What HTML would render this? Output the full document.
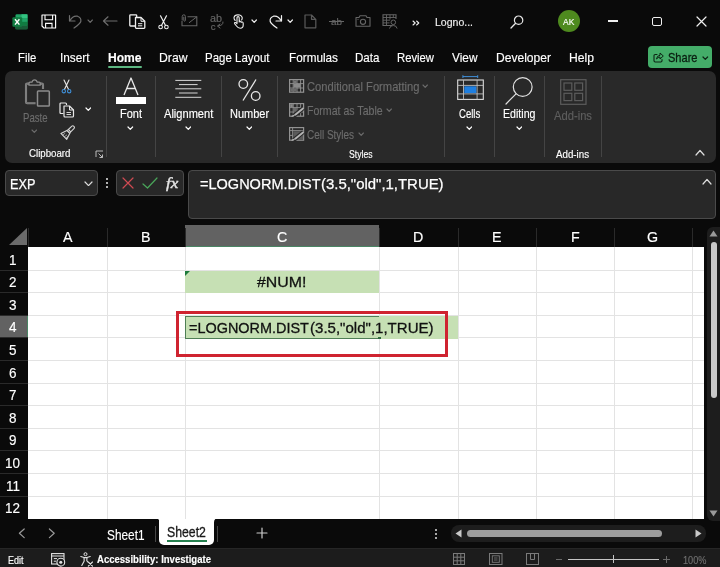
<!DOCTYPE html>
<html><head><meta charset="utf-8"><title>Excel</title>
<style>
html,body{margin:0;padding:0;}
body{width:720px;height:567px;overflow:hidden;background:#0a0a0a;position:relative;font-family:"Liberation Sans",sans-serif;}
.t{position:absolute;white-space:nowrap;transform-origin:0 0;line-height:normal;}
.r{position:absolute;display:block;}
#app{position:absolute;left:0;top:0;width:720px;height:567px;will-change:transform;}
</style></head><body><div id="app">
<div class="r" style="left:28px;top:247px;width:676px;height:271.5px;background:#fff;"></div>
<div class="r" style="left:184.5px;top:225px;width:194.5px;height:22.3px;background:#626262;border-bottom:1.3px solid #4a8564;box-sizing:border-box;"></div>
<div class="r" style="left:27.5px;top:228px;width:1px;height:19px;background:#2a2a2a;"></div>
<div class="r" style="left:106.5px;top:228px;width:1px;height:19px;background:#2a2a2a;"></div>
<div class="r" style="left:184.5px;top:228px;width:1px;height:19px;background:#2a2a2a;"></div>
<div class="r" style="left:378.5px;top:228px;width:1px;height:19px;background:#2a2a2a;"></div>
<div class="r" style="left:457.5px;top:228px;width:1px;height:19px;background:#2a2a2a;"></div>
<div class="r" style="left:535.5px;top:228px;width:1px;height:19px;background:#2a2a2a;"></div>
<div class="r" style="left:613.5px;top:228px;width:1px;height:19px;background:#2a2a2a;"></div>
<div class="r" style="left:691.5px;top:228px;width:1px;height:19px;background:#2a2a2a;"></div>
<span class="t" style="left:62.75px;top:228.39px;font-size:15px;color:#fff;transform:scaleX(0.9500);-webkit-text-stroke:0.15px;">A</span>
<span class="t" style="left:141.25px;top:228.39px;font-size:15px;color:#fff;transform:scaleX(0.9500);-webkit-text-stroke:0.15px;">B</span>
<span class="t" style="left:276.85px;top:228.39px;font-size:15px;color:#fff;transform:scaleX(0.9500);-webkit-text-stroke:0.15px;">C</span>
<span class="t" style="left:413.35px;top:228.39px;font-size:15px;color:#fff;transform:scaleX(0.9500);-webkit-text-stroke:0.15px;">D</span>
<span class="t" style="left:492.25px;top:228.39px;font-size:15px;color:#fff;transform:scaleX(0.9500);-webkit-text-stroke:0.15px;">E</span>
<span class="t" style="left:570.65px;top:228.39px;font-size:15px;color:#fff;transform:scaleX(0.9500);-webkit-text-stroke:0.15px;">F</span>
<span class="t" style="left:647.46px;top:228.39px;font-size:15px;color:#fff;transform:scaleX(0.9500);-webkit-text-stroke:0.15px;">G</span>
<div class="r" style="left:106.5px;top:247px;width:1px;height:271.5px;background:#e3e3e3;"></div>
<div class="r" style="left:184.5px;top:247px;width:1px;height:271.5px;background:#e3e3e3;"></div>
<div class="r" style="left:378.5px;top:247px;width:1px;height:271.5px;background:#e3e3e3;"></div>
<div class="r" style="left:457.5px;top:247px;width:1px;height:271.5px;background:#e3e3e3;"></div>
<div class="r" style="left:535.5px;top:247px;width:1px;height:271.5px;background:#e3e3e3;"></div>
<div class="r" style="left:613.5px;top:247px;width:1px;height:271.5px;background:#e3e3e3;"></div>
<div class="r" style="left:691.5px;top:247px;width:1px;height:271.5px;background:#e3e3e3;"></div>
<div class="r" style="left:28px;top:269.5px;width:676px;height:1px;background:#e3e3e3;"></div>
<div class="r" style="left:28px;top:291.5px;width:676px;height:1px;background:#e3e3e3;"></div>
<div class="r" style="left:28px;top:314.5px;width:676px;height:1px;background:#e3e3e3;"></div>
<div class="r" style="left:28px;top:336.5px;width:676px;height:1px;background:#e3e3e3;"></div>
<div class="r" style="left:28px;top:359.5px;width:676px;height:1px;background:#e3e3e3;"></div>
<div class="r" style="left:28px;top:382.5px;width:676px;height:1px;background:#e3e3e3;"></div>
<div class="r" style="left:28px;top:404.5px;width:676px;height:1px;background:#e3e3e3;"></div>
<div class="r" style="left:28px;top:427.5px;width:676px;height:1px;background:#e3e3e3;"></div>
<div class="r" style="left:28px;top:449.5px;width:676px;height:1px;background:#e3e3e3;"></div>
<div class="r" style="left:28px;top:472.5px;width:676px;height:1px;background:#e3e3e3;"></div>
<div class="r" style="left:28px;top:495.5px;width:676px;height:1px;background:#e3e3e3;"></div>
<span class="t" style="left:8.95px;top:251.66px;font-size:14.5px;color:#fff;transform:scaleX(0.9300);-webkit-text-stroke:0.15px;">1</span>
<span class="t" style="left:8.95px;top:274.26px;font-size:14.5px;color:#fff;transform:scaleX(0.9300);-webkit-text-stroke:0.15px;">2</span>
<div class="r" style="left:0px;top:269.5px;width:28px;height:1px;background:#2a2a2a;"></div>
<span class="t" style="left:8.95px;top:296.86px;font-size:14.5px;color:#fff;transform:scaleX(0.9300);-webkit-text-stroke:0.15px;">3</span>
<div class="r" style="left:0px;top:291.5px;width:28px;height:1px;background:#2a2a2a;"></div>
<div class="r" style="left:0px;top:315px;width:28px;height:22px;background:#626262;border-right:1.3px solid #4a8564;box-sizing:border-box;"></div>
<span class="t" style="left:8.95px;top:319.46px;font-size:14.5px;color:#fff;transform:scaleX(0.9300);-webkit-text-stroke:0.15px;">4</span>
<div class="r" style="left:0px;top:314.5px;width:28px;height:1px;background:#2a2a2a;"></div>
<span class="t" style="left:8.95px;top:342.06px;font-size:14.5px;color:#fff;transform:scaleX(0.9300);-webkit-text-stroke:0.15px;">5</span>
<div class="r" style="left:0px;top:336.5px;width:28px;height:1px;background:#2a2a2a;"></div>
<span class="t" style="left:8.95px;top:364.66px;font-size:14.5px;color:#fff;transform:scaleX(0.9300);-webkit-text-stroke:0.15px;">6</span>
<div class="r" style="left:0px;top:359.5px;width:28px;height:1px;background:#2a2a2a;"></div>
<span class="t" style="left:8.95px;top:387.26px;font-size:14.5px;color:#fff;transform:scaleX(0.9300);-webkit-text-stroke:0.15px;">7</span>
<div class="r" style="left:0px;top:382.5px;width:28px;height:1px;background:#2a2a2a;"></div>
<span class="t" style="left:8.95px;top:409.86px;font-size:14.5px;color:#fff;transform:scaleX(0.9300);-webkit-text-stroke:0.15px;">8</span>
<div class="r" style="left:0px;top:404.5px;width:28px;height:1px;background:#2a2a2a;"></div>
<span class="t" style="left:8.95px;top:432.46px;font-size:14.5px;color:#fff;transform:scaleX(0.9300);-webkit-text-stroke:0.15px;">9</span>
<div class="r" style="left:0px;top:427.5px;width:28px;height:1px;background:#2a2a2a;"></div>
<span class="t" style="left:5.20px;top:455.06px;font-size:14.5px;color:#fff;transform:scaleX(0.9300);-webkit-text-stroke:0.15px;">10</span>
<div class="r" style="left:0px;top:449.5px;width:28px;height:1px;background:#2a2a2a;"></div>
<span class="t" style="left:5.70px;top:477.66px;font-size:14.5px;color:#fff;transform:scaleX(0.9300);-webkit-text-stroke:0.15px;">11</span>
<div class="r" style="left:0px;top:472.5px;width:28px;height:1px;background:#2a2a2a;"></div>
<span class="t" style="left:5.20px;top:500.26px;font-size:14.5px;color:#fff;transform:scaleX(0.9300);-webkit-text-stroke:0.15px;">12</span>
<div class="r" style="left:0px;top:495.5px;width:28px;height:1px;background:#2a2a2a;"></div>
<svg class="r" style="left:9px;top:228px;" width="18" height="17" viewBox="0 0 18 17" fill="none"><path d="M18 0 L18 17 L0 17 Z" fill="#6b6b6b"/></svg>
<div class="r" style="left:185px;top:270.5px;width:193.5px;height:22px;background:#c6e0b4;"></div>
<svg class="r" style="left:185px;top:270.5px;" width="6" height="6" viewBox="0 0 6 6" fill="none"><path d="M0 0 L5 0 L0 5 Z" fill="#1e7b3c"/></svg>
<span class="t" style="left:257.20px;top:272.98px;font-size:15.4px;color:#111;transform:scaleX(1.0310);-webkit-text-stroke:0.3px;">#NUM!</span>
<div class="r" style="left:185px;top:316px;width:272.5px;height:22.5px;background:#c6e0b4;"></div>
<div class="r" style="left:185px;top:316px;width:194px;height:22.5px;background:transparent;border:1px solid #4f7f55;border-right:none;box-sizing:border-box;"></div>
<div class="r" style="left:377.5px;top:337px;width:3px;height:2px;background:#2f6b3f;"></div>
<span class="t" style="left:188.60px;top:318.88px;font-size:15.2px;color:#111;transform:scaleX(0.9504);-webkit-text-stroke:0.3px;">=LOGNORM.DIST</span>
<span class="t" style="left:309.60px;top:318.88px;font-size:15.2px;color:#111;transform:scaleX(0.9910);-webkit-text-stroke:0.3px;">(3.5,"old",1,TRUE)</span>
<div class="r" style="left:176.3px;top:311px;width:271.7px;height:45.5px;background:transparent;border:3.2px solid #cf2330;box-sizing:border-box;"></div>
<div class="r" style="left:5px;top:170px;width:93px;height:25.7px;background:#282828;border:1px solid #4a4a4a;border-radius:4px;box-sizing:border-box;"></div>
<span class="t" style="left:9.90px;top:175.19px;font-size:15px;color:#fff;transform:scaleX(0.8462);-webkit-text-stroke:0.25px;">EXP</span>
<svg class="r" style="left:83.5px;top:180.7px;" width="9" height="5.6" viewBox="0 0 9 5.6" fill="none"><path d="M1 1 L4.5 4.6 L8 1" stroke="#ddd" stroke-width="1.2" stroke-linecap="round" stroke-linejoin="round"/></svg>
<div class="r" style="left:106px;top:178px;width:2px;height:2px;background:#e8e8e8;border-radius:1px;"></div>
<div class="r" style="left:106px;top:182.2px;width:2px;height:2px;background:#e8e8e8;border-radius:1px;"></div>
<div class="r" style="left:106px;top:186.4px;width:2px;height:2px;background:#e8e8e8;border-radius:1px;"></div>
<div class="r" style="left:116px;top:170px;width:68px;height:25.7px;background:#282828;border:1px solid #4a4a4a;border-radius:4px;box-sizing:border-box;"></div>
<svg class="r" style="left:122px;top:177px;" width="12" height="12" viewBox="0 0 12 12" fill="none"><path d="M1 1 L11 11 M11 1 L1 11" stroke="#cf4a52" stroke-width="1.2" stroke-linecap="round"/></svg>
<svg class="r" style="left:142px;top:177px;" width="16" height="12" viewBox="0 0 16 12" fill="none"><path d="M1 7 L5.5 11 L15 1" stroke="#4aa65a" stroke-width="1.2" stroke-linecap="round" stroke-linejoin="round"/></svg>
<span class="t" style="left:166.00px;top:174.58px;font-size:15px;color:#e4e4e4;transform:scaleX(1.1363);-webkit-text-stroke:0.4px;font-style:italic;font-family:'Liberation Serif',serif;">fx</span>
<div class="r" style="left:187.5px;top:170px;width:528.5px;height:49px;background:#282828;border:1px solid #4a4a4a;border-radius:4px;box-sizing:border-box;"></div>
<span class="t" style="left:199.60px;top:175.39px;font-size:15px;color:#fff;transform:scaleX(0.9679);-webkit-text-stroke:0.25px;">=LOGNORM.DIST</span>
<span class="t" style="left:321.20px;top:175.39px;font-size:15px;color:#fff;transform:scaleX(0.9952);-webkit-text-stroke:0.25px;">(3.5,"old",1,TRUE)</span>
<svg class="r" style="left:702px;top:177.8px;" width="10" height="7" viewBox="0 0 10 7" fill="none"><path d="M1 6 L5 1.5 L9 6" stroke="#ddd" stroke-width="1.2" stroke-linecap="round" stroke-linejoin="round"/></svg>
<div class="r" style="left:706.8px;top:226.5px;width:13.2px;height:294px;background:#1d1d1d;border-radius:6px 0 0 6px;"></div>
<div class="r" style="left:710.5px;top:241.5px;width:6.5px;height:156.5px;background:#c9c9c9;border-radius:3.5px;"></div>
<svg class="r" style="left:709.2px;top:229.5px;" width="9" height="7" viewBox="0 0 9 7" fill="none"><path d="M4.5 0.5 L8.5 6.5 L0.5 6.5 Z" fill="#9a9a9a"/></svg>
<svg class="r" style="left:709.2px;top:509.5px;" width="9" height="7" viewBox="0 0 9 7" fill="none"><path d="M4.5 6.5 L8.5 0.5 L0.5 0.5 Z" fill="#9a9a9a"/></svg>
<div class="r" style="left:451px;top:525px;width:255px;height:16.5px;background:#1d1d1d;border-radius:8px;"></div>
<div class="r" style="left:466.5px;top:530px;width:195.3px;height:6.5px;background:#9d9d9d;border-radius:3.5px;"></div>
<svg class="r" style="left:454.5px;top:529px;" width="7" height="9" viewBox="0 0 7 9" fill="none"><path d="M0.5 4.5 L6.5 0.5 L6.5 8.5 Z" fill="#c9c9c9"/></svg>
<svg class="r" style="left:694.5px;top:529px;" width="7" height="9" viewBox="0 0 7 9" fill="none"><path d="M6.5 4.5 L0.5 0.5 L0.5 8.5 Z" fill="#c9c9c9"/></svg>
<div class="r" style="left:435.2px;top:529.2px;width:1.6px;height:1.6px;background:#ddd;border-radius:1px;"></div>
<div class="r" style="left:435.2px;top:533.2px;width:1.6px;height:1.6px;background:#ddd;border-radius:1px;"></div>
<div class="r" style="left:435.2px;top:537.2px;width:1.6px;height:1.6px;background:#ddd;border-radius:1px;"></div>
<div class="r" style="left:159.4px;top:518.5px;width:54.8px;height:26.3px;background:#fff;border-radius:0 0 5px 5px;"></div>
<span class="t" style="left:167.30px;top:523.97px;font-size:14.3px;color:#1a1a1a;transform:scaleX(0.8583);-webkit-text-stroke:0.3px;">Sheet2</span>
<div class="r" style="left:167.3px;top:540.3px;width:39.5px;height:2px;background:#26804f;"></div>
<span class="t" style="left:106.70px;top:527.27px;font-size:14.3px;color:#fff;transform:scaleX(0.8274);-webkit-text-stroke:0.15px;">Sheet1</span>
<div class="r" style="left:155.2px;top:525.5px;width:1px;height:16px;background:#474747;"></div>
<div class="r" style="left:217px;top:525.5px;width:1px;height:16px;background:#474747;"></div>
<svg class="r" style="left:18px;top:528px;" width="8" height="11" viewBox="0 0 8 11" fill="none"><path d="M6.2 1 L1.4 5.3 L6.2 9.6" stroke="#9a9a9a" stroke-width="1.2" stroke-linecap="round" stroke-linejoin="round"/></svg>
<svg class="r" style="left:47.5px;top:528px;" width="8" height="11" viewBox="0 0 8 11" fill="none"><path d="M1.4 1 L6.2 5.3 L1.4 9.6" stroke="#9a9a9a" stroke-width="1.2" stroke-linecap="round" stroke-linejoin="round"/></svg>
<svg class="r" style="left:155px;top:518.3px;" width="4.5" height="4.5" viewBox="0 0 4.5 4.5" fill="none"><path d="M0 0 H4.5 V4.5 Q4.5 0 0 0 Z" fill="#fff"/></svg>
<svg class="r" style="left:214.1px;top:518.3px;" width="4.5" height="4.5" viewBox="0 0 4.5 4.5" fill="none"><path d="M4.5 0 H0 V4.5 Q0 0 4.5 0 Z" fill="#fff"/></svg>
<svg class="r" style="left:256px;top:527px;" width="12" height="12" viewBox="0 0 12 12" fill="none"><path d="M6 1 L6 11 M1 6 L11 6" stroke="#ccc" stroke-width="1.2" stroke-linecap="round"/></svg>
<div class="r" style="left:0px;top:547.6px;width:720px;height:20px;background:#1c1c1c;border-top:1px solid #262626;"></div>
<span class="t" style="left:8.30px;top:553.56px;font-size:10.8px;color:#fff;transform:scaleX(0.8329);-webkit-text-stroke:0.15px;">Edit</span>
<span class="t" style="left:96.70px;top:553.46px;font-size:10.8px;color:#fff;transform:scaleX(0.8834);-webkit-text-stroke:0.15px;font-weight:bold;">Accessibility: Investigate</span>
<span class="t" style="left:682.50px;top:553.62px;font-size:10.5px;color:#707070;transform:scaleX(0.8751);-webkit-text-stroke:0.15px;">100%</span>
<span class="t" style="left:17.50px;top:51.49px;font-size:12.6px;color:#fff;transform:scaleX(0.8964);-webkit-text-stroke:0.15px;">File</span>
<span class="t" style="left:60.00px;top:51.49px;font-size:12.6px;color:#fff;transform:scaleX(0.9361);-webkit-text-stroke:0.15px;">Insert</span>
<span class="t" style="left:158.50px;top:51.49px;font-size:12.6px;color:#fff;transform:scaleX(0.9693);-webkit-text-stroke:0.15px;">Draw</span>
<span class="t" style="left:204.50px;top:51.49px;font-size:12.6px;color:#fff;transform:scaleX(0.9116);-webkit-text-stroke:0.15px;">Page Layout</span>
<span class="t" style="left:288.50px;top:51.49px;font-size:12.6px;color:#fff;transform:scaleX(0.9331);-webkit-text-stroke:0.15px;">Formulas</span>
<span class="t" style="left:355.00px;top:51.49px;font-size:12.6px;color:#fff;transform:scaleX(0.9205);-webkit-text-stroke:0.15px;">Data</span>
<span class="t" style="left:397.00px;top:51.49px;font-size:12.6px;color:#fff;transform:scaleX(0.8956);-webkit-text-stroke:0.15px;">Review</span>
<span class="t" style="left:452.00px;top:51.49px;font-size:12.6px;color:#fff;transform:scaleX(0.9416);-webkit-text-stroke:0.15px;">View</span>
<span class="t" style="left:495.50px;top:51.49px;font-size:12.6px;color:#fff;transform:scaleX(0.9576);-webkit-text-stroke:0.15px;">Developer</span>
<span class="t" style="left:569.00px;top:51.49px;font-size:12.6px;color:#fff;transform:scaleX(0.9647);-webkit-text-stroke:0.15px;">Help</span>
<span class="t" style="left:108.00px;top:51.49px;font-size:12.6px;color:#fff;transform:scaleX(0.9570);-webkit-text-stroke:0.15px;font-weight:bold;">Home</span>
<div class="r" style="left:108.2px;top:65.7px;width:34px;height:2px;background:#5db882;border-radius:1px;"></div>
<div class="r" style="left:648px;top:46px;width:64px;height:22px;background:#44ad69;border-radius:4px;"></div>
<span class="t" style="left:667.50px;top:51.19px;font-size:12.6px;color:#0a1f11;transform:scaleX(0.8774);-webkit-text-stroke:0.3px;">Share</span>
<svg class="r" style="left:702.2px;top:55.599999999999994px;" width="6.6" height="4.4" viewBox="0 0 6.6 4.4" fill="none"><path d="M1 1 L3.3 3.4 L5.6 1" stroke="#0c2414" stroke-width="1.2" stroke-linecap="round" stroke-linejoin="round"/></svg>
<svg class="r" style="left:652.5px;top:51.2px;" width="11" height="12" viewBox="0 0 11 12" fill="none"><path d="M4 3.5 H2.2 Q1 3.5 1 4.7 V9.8 Q1 11 2.2 11 H7.8 Q9 11 9 9.8 V8.5" stroke="#0c2414" stroke-width="1.1" stroke-linecap="round"/><path d="M3.5 8 Q3.8 4.6 7 4.3 V2 L10.3 5 L7 8 V6 Q5 6 3.5 8 Z" stroke="#0c2414" stroke-width="1" stroke-linejoin="round"/></svg>
<div class="r" style="left:5px;top:71px;width:711px;height:91.5px;background:#292929;border-radius:7px;"></div>
<div class="r" style="left:105.5px;top:76px;width:1px;height:81px;background:#444;"></div>
<div class="r" style="left:155.0px;top:76px;width:1px;height:81px;background:#444;"></div>
<div class="r" style="left:221.0px;top:76px;width:1px;height:81px;background:#444;"></div>
<div class="r" style="left:277.0px;top:76px;width:1px;height:81px;background:#444;"></div>
<div class="r" style="left:444.0px;top:76px;width:1px;height:81px;background:#444;"></div>
<div class="r" style="left:494.0px;top:76px;width:1px;height:81px;background:#444;"></div>
<div class="r" style="left:544.0px;top:76px;width:1px;height:81px;background:#444;"></div>
<div class="r" style="left:601.0px;top:76px;width:1px;height:81px;background:#444;"></div>
<svg class="r" style="left:24px;top:79px;" width="28" height="29" viewBox="0 0 28 29" fill="none"><rect x="2" y="4.6" width="17" height="19.6" rx="1.2" stroke="#8c8c8c" stroke-width="2.1"/><rect x="2" y="4.6" width="17" height="19.6" rx="1.2" stroke="#5a5a5a" stroke-width="0.5"/><path d="M5 6.2 V4.2 Q5 3.2 6 3.2 H8 Q8.5 0.8 10.6 0.8 Q12.7 0.8 13.2 3.2 H15.2 Q16.2 3.2 16.2 4.2 V6.2 Z" fill="#292929" stroke="#8c8c8c" stroke-width="1.3" stroke-linejoin="round"/><rect x="11.6" y="10" width="15.4" height="18.5" fill="#292929"/><rect x="13.5" y="11.9" width="11.8" height="15.2" rx="0.8" stroke="#8c8c8c" stroke-width="1.5"/></svg>
<span class="t" style="left:22.50px;top:110.71px;font-size:12.2px;color:#6c6c6c;transform:scaleX(0.7853);-webkit-text-stroke:0.15px;">Paste</span>
<svg class="r" style="left:30.7px;top:128.8px;" width="6.6" height="4.4" viewBox="0 0 6.6 4.4" fill="none"><path d="M1 1 L3.3 3.4 L5.6 1" stroke="#6c6c6c" stroke-width="1.1" stroke-linecap="round" stroke-linejoin="round"/></svg>
<svg class="r" style="left:61px;top:78.5px;" width="11" height="15" viewBox="0 0 11 15" fill="none"><path d="M3 1 L7.6 10.4 M8 1 L3.4 10.4" stroke="#e8e8e8" stroke-width="1.1" stroke-linecap="round"/><circle cx="2.8" cy="12.2" r="1.7" stroke="#3f8fd8" stroke-width="1.1"/><circle cx="8.2" cy="12.2" r="1.7" stroke="#3f8fd8" stroke-width="1.1"/></svg>
<svg class="r" style="left:59px;top:101.5px;" width="16" height="16" viewBox="0 0 16 16" fill="none"><path d="M4.5 11.5 H2 Q1 11.5 1 10.5 V2 Q1 1 2 1 H6.5 Q7.5 1 7.5 2 V3" stroke="#e8e8e8" stroke-width="1.2"/><path d="M5 4 H10.5 L14.5 8 V14 Q14.5 15 13.5 15 H6 Q5 15 5 14 Z" stroke="#e8e8e8" stroke-width="1.2" stroke-linejoin="round"/><path d="M10.5 4 V8 H14.5" stroke="#e8e8e8" stroke-width="1"/><path d="M7.5 10.5 H12 M7.5 12.5 H12" stroke="#e8e8e8" stroke-width="0.9"/></svg>
<svg class="r" style="left:84.9px;top:107.1px;" width="6.6" height="4.4" viewBox="0 0 6.6 4.4" fill="none"><path d="M1 1 L3.3 3.4 L5.6 1" stroke="#fff" stroke-width="1.2" stroke-linecap="round" stroke-linejoin="round"/></svg>
<svg class="r" style="left:59.5px;top:125px;" width="16" height="16" viewBox="0 0 16 16" fill="none"><path d="M11.6 1.3 Q12.8 0.2 13.9 1.3 Q15 2.5 13.9 3.6 L10.7 6.8 L8.4 4.5 Z" stroke="#d4d4d4" stroke-width="1.1" stroke-linejoin="round"/><path d="M8.4 4.5 L10.7 6.8 L9.8 8.3 L6.9 5.4 Z" stroke="#d4d4d4" stroke-width="1" stroke-linejoin="round"/><path d="M6.9 5.4 L0.9 8.4 L6.7 14.4 L9.8 8.3 Z" stroke="#d4d4d4" stroke-width="1.1" stroke-linejoin="round"/><path d="M2.6 10 L5.2 8.3 M4.3 11.8 L7 9.8 M5.8 13.3 L8.3 11" stroke="#d4d4d4" stroke-width="0.7"/></svg>
<span class="t" style="left:29.00px;top:147.46px;font-size:10.8px;color:#fff;transform:scaleX(0.8977);-webkit-text-stroke:0.15px;">Clipboard</span>
<svg class="r" style="left:95px;top:150px;" width="9" height="8" viewBox="0 0 9 8" fill="none"><path d="M1 7 V1 H8" stroke="#bbb" stroke-width="1"/><path d="M3.5 3.5 L7.5 7.5 M7.5 4.5 V7.5 H4.5" stroke="#bbb" stroke-width="1"/></svg>
<svg class="r" style="left:123px;top:77px;" width="16" height="19" viewBox="0 0 16 19" fill="none"><path d="M1 18 L8 1 L15 18 M3.7 11.5 H12.3" stroke="#e8e8e8" stroke-width="1.3" stroke-linejoin="round"/></svg>
<div class="r" style="left:116.2px;top:97px;width:29.7px;height:7px;background:#fff;"></div>
<span class="t" style="left:120.00px;top:107.31px;font-size:12.2px;color:#fff;transform:scaleX(0.9012);-webkit-text-stroke:0.15px;">Font</span>
<svg class="r" style="left:127.0px;top:126.10000000000001px;" width="6.6" height="4.4" viewBox="0 0 6.6 4.4" fill="none"><path d="M1 1 L3.3 3.4 L5.6 1" stroke="#fff" stroke-width="1.2" stroke-linecap="round" stroke-linejoin="round"/></svg>
<svg class="r" style="left:174px;top:78px;" width="28" height="22" viewBox="0 0 28 22" fill="none"><path d="M1.3 2.4 H27.3" stroke="#d8d8d8" stroke-width="1"/><path d="M5 6.6 H23.6" stroke="#d8d8d8" stroke-width="1"/><path d="M1.3 10.8 H27.3" stroke="#d8d8d8" stroke-width="1"/><path d="M5 15 H23.6" stroke="#d8d8d8" stroke-width="1"/><path d="M1.3 19.3 H27.3" stroke="#d8d8d8" stroke-width="1"/></svg>
<span class="t" style="left:163.70px;top:107.31px;font-size:12.2px;color:#fff;transform:scaleX(0.9087);-webkit-text-stroke:0.15px;">Alignment</span>
<svg class="r" style="left:184.7px;top:126.10000000000001px;" width="6.6" height="4.4" viewBox="0 0 6.6 4.4" fill="none"><path d="M1 1 L3.3 3.4 L5.6 1" stroke="#fff" stroke-width="1.2" stroke-linecap="round" stroke-linejoin="round"/></svg>
<svg class="r" style="left:237px;top:78px;" width="25" height="24" viewBox="0 0 25 24" fill="none"><circle cx="6.3" cy="6" r="4.3" stroke="#e8e8e8" stroke-width="1.3"/><circle cx="18.7" cy="18" r="4.3" stroke="#e8e8e8" stroke-width="1.3"/><path d="M19 1.5 L6 22.5" stroke="#e8e8e8" stroke-width="1.3"/></svg>
<span class="t" style="left:229.50px;top:107.31px;font-size:12.2px;color:#fff;transform:scaleX(0.9034);-webkit-text-stroke:0.15px;">Number</span>
<svg class="r" style="left:245.89999999999998px;top:126.10000000000001px;" width="6.6" height="4.4" viewBox="0 0 6.6 4.4" fill="none"><path d="M1 1 L3.3 3.4 L5.6 1" stroke="#fff" stroke-width="1.2" stroke-linecap="round" stroke-linejoin="round"/></svg>
<svg class="r" style="left:288.5px;top:78.5px;" width="16" height="14" viewBox="0 0 16 14" fill="none"><rect x="0.6" y="0.6" width="14" height="12.6" stroke="#929292" stroke-width="1.2"/><path d="M0.6 4.6 H14.6 M0.6 9 H14.6 M4.2 0.6 V13.2 M8 0.6 V13.2 M11.6 0.6 V13.2" stroke="#929292" stroke-width="0.9"/><rect x="4.6" y="1.4" width="3" height="2.8" fill="#777"/><rect x="4.6" y="5" width="6.6" height="3.6" fill="#8a8a8a"/><rect x="1.2" y="9.4" width="6.4" height="3.2" fill="#6a6a6a"/></svg>
<svg class="r" style="left:288.5px;top:102.5px;" width="16" height="14" viewBox="0 0 16 14" fill="none"><rect x="0.6" y="0.6" width="14" height="12.6" stroke="#929292" stroke-width="1.2"/><path d="M0.6 4.6 H14.6 M0.6 9 H14.6 M4.2 0.6 V13.2 M8 0.6 V13.2 M11.6 0.6 V13.2" stroke="#929292" stroke-width="0.9"/><rect x="1.2" y="1.2" width="2.6" height="3" fill="#888"/><rect x="4.6" y="5" width="3" height="3.6" fill="#6a6a6a"/><path d="M14.4 5 L4.6 13.2" stroke="#292929" stroke-width="4.2"/><path d="M14 5.4 L6.6 11.6" stroke="#b4b4b4" stroke-width="1.9" stroke-linecap="round"/><path d="M6.6 11.6 L3 13.2" stroke="#b4b4b4" stroke-width="1.1" stroke-linecap="round"/></svg>
<svg class="r" style="left:288.5px;top:126.5px;" width="16" height="14" viewBox="0 0 16 14" fill="none"><rect x="0.6" y="0.6" width="14" height="12.6" stroke="#929292" stroke-width="1.2"/><path d="M0.6 3.6 H14.6 M3.6 0.6 V13.2 M0.6 8.4 H3.6" stroke="#929292" stroke-width="0.9"/><rect x="4.2" y="4.2" width="10" height="8.6" fill="#5a5a5a"/><path d="M14.4 5 L4.6 13.2" stroke="#292929" stroke-width="4.2"/><path d="M14 5.4 L6.6 11.6" stroke="#b4b4b4" stroke-width="1.9" stroke-linecap="round"/><path d="M6.6 11.6 L3 13.2" stroke="#b4b4b4" stroke-width="1.1" stroke-linecap="round"/></svg>
<span class="t" style="left:306.90px;top:79.81px;font-size:12.2px;color:#6c6c6c;transform:scaleX(0.9174);-webkit-text-stroke:0.15px;">Conditional Formatting</span>
<svg class="r" style="left:422.3px;top:83.85px;" width="6.4" height="4.3" viewBox="0 0 6.4 4.3" fill="none"><path d="M1 1 L3.2 3.3 L5.4 1" stroke="#6c6c6c" stroke-width="1.1" stroke-linecap="round" stroke-linejoin="round"/></svg>
<span class="t" style="left:307.30px;top:103.81px;font-size:12.2px;color:#6c6c6c;transform:scaleX(0.8677);-webkit-text-stroke:0.15px;">Format as Table</span>
<svg class="r" style="left:386.0px;top:107.85px;" width="6.4" height="4.3" viewBox="0 0 6.4 4.3" fill="none"><path d="M1 1 L3.2 3.3 L5.4 1" stroke="#6c6c6c" stroke-width="1.1" stroke-linecap="round" stroke-linejoin="round"/></svg>
<span class="t" style="left:306.90px;top:127.81px;font-size:12.2px;color:#6c6c6c;transform:scaleX(0.8173);-webkit-text-stroke:0.15px;">Cell Styles</span>
<svg class="r" style="left:357.6px;top:131.85px;" width="6.4" height="4.3" viewBox="0 0 6.4 4.3" fill="none"><path d="M1 1 L3.2 3.3 L5.4 1" stroke="#6c6c6c" stroke-width="1.1" stroke-linecap="round" stroke-linejoin="round"/></svg>
<span class="t" style="left:349.00px;top:147.96px;font-size:10.8px;color:#fff;transform:scaleX(0.7990);-webkit-text-stroke:0.15px;">Styles</span>
<svg class="r" style="left:456.5px;top:75px;" width="27" height="25" viewBox="0 0 27 25" fill="none"><path d="M5.9 1.6 H20.7 M5.9 0.2 V3 M20.7 0.2 V3" stroke="#3f8fd8" stroke-width="1"/><rect x="0.7" y="5" width="25.6" height="19.4" stroke="#dcdcdc" stroke-width="1.1"/><path d="M0.7 10.4 H26.3 M0.7 18.9 H26.3 M6.5 5 V24.4 M20.1 5 V24.4" stroke="#bdbdbd" stroke-width="0.9"/><rect x="7.3" y="11.3" width="12" height="6.8" fill="#1f7fe0"/></svg>
<span class="t" style="left:458.70px;top:107.31px;font-size:12.2px;color:#fff;transform:scaleX(0.7855);-webkit-text-stroke:0.15px;">Cells</span>
<svg class="r" style="left:465.9px;top:126.10000000000001px;" width="6.6" height="4.4" viewBox="0 0 6.6 4.4" fill="none"><path d="M1 1 L3.3 3.4 L5.6 1" stroke="#fff" stroke-width="1.2" stroke-linecap="round" stroke-linejoin="round"/></svg>
<svg class="r" style="left:504px;top:75.5px;" width="30" height="30" viewBox="0 0 30 30" fill="none"><circle cx="18.7" cy="11" r="9.4" stroke="#e0e0e0" stroke-width="1.2"/><path d="M12 17.8 L2 28" stroke="#e0e0e0" stroke-width="1.2" stroke-linecap="round"/></svg>
<span class="t" style="left:502.50px;top:107.31px;font-size:12.2px;color:#fff;transform:scaleX(0.8712);-webkit-text-stroke:0.15px;">Editing</span>
<svg class="r" style="left:515.5px;top:126.10000000000001px;" width="6.6" height="4.4" viewBox="0 0 6.6 4.4" fill="none"><path d="M1 1 L3.3 3.4 L5.6 1" stroke="#fff" stroke-width="1.2" stroke-linecap="round" stroke-linejoin="round"/></svg>
<svg class="r" style="left:559.5px;top:79px;" width="27" height="26" viewBox="0 0 27 26" fill="none"><rect x="0.7" y="0.7" width="25.3" height="24.6" stroke="#5c5c5c" stroke-width="1.2"/><rect x="4" y="4" width="7.8" height="7.3" stroke="#5c5c5c" stroke-width="1.2"/><rect x="14.8" y="4" width="7.8" height="7.3" stroke="#5c5c5c" stroke-width="1.2"/><rect x="4" y="14.3" width="7.8" height="7.3" stroke="#5c5c5c" stroke-width="1.2"/><rect x="14.8" y="14.3" width="7.8" height="7.3" stroke="#5c5c5c" stroke-width="1.2"/></svg>
<span class="t" style="left:554.00px;top:109.41px;font-size:12.2px;color:#5e5e5e;transform:scaleX(0.9186);-webkit-text-stroke:0.15px;">Add-ins</span>
<span class="t" style="left:556.00px;top:147.96px;font-size:10.8px;color:#fff;transform:scaleX(0.9012);-webkit-text-stroke:0.15px;">Add-ins</span>
<svg class="r" style="left:695px;top:148.5px;" width="10" height="7" viewBox="0 0 10 7" fill="none"><path d="M1 6 L5 1.5 L9 6" stroke="#ddd" stroke-width="1.2" stroke-linecap="round" stroke-linejoin="round"/></svg>
<svg class="r" style="left:11.5px;top:13.5px;" width="16" height="16" viewBox="0 0 16 16" fill="none"><rect x="3.5" y="0.3" width="12" height="15" rx="1.3" fill="#21a366"/><rect x="9.5" y="0.3" width="6" height="3.8" fill="#33c481"/><rect x="9.5" y="4.1" width="6" height="3.7" fill="#21a366"/><rect x="9.5" y="7.8" width="6" height="3.7" fill="#107c41"/><rect x="3.5" y="11.5" width="12" height="3.8" fill="#185c37"/><rect x="3.5" y="7.8" width="6" height="3.7" fill="#185c37"/><rect x="3.5" y="4.1" width="6" height="3.7" fill="#107c41"/><rect x="0.4" y="3.2" width="9.8" height="9.5" rx="1" fill="#107c41"/><path d="M3 5.3 L7.4 10.6 M7.4 5.3 L3 10.6" stroke="#fff" stroke-width="1.4"/></svg>
<svg class="r" style="left:41px;top:13.8px;" width="16" height="15" viewBox="0 0 16 15" fill="none"><path d="M1 1 H14.6 V14 H3 L1 12 Z" stroke="#fff" stroke-width="1.15" stroke-linejoin="round"/><path d="M4 1 V5.8 H11.6 V1" stroke="#fff" stroke-width="1.1"/><path d="M4.6 14 V9.4 H11 V14" stroke="#fff" stroke-width="1.1"/></svg>
<svg class="r" style="left:68px;top:14px;" width="15" height="15" viewBox="0 0 15 15" fill="none"><path d="M1.5 1.5 V7 H7" stroke="#6e6e6e" stroke-width="1.2" stroke-linecap="round" stroke-linejoin="round"/><path d="M1.8 6.8 Q5 1.2 9.5 2.2 Q13.5 3.5 12.8 7.5 Q12.3 9.5 6 14" stroke="#6e6e6e" stroke-width="1.2" stroke-linecap="round"/></svg>
<svg class="r" style="left:86.8px;top:18.650000000000002px;" width="6.4" height="4.3" viewBox="0 0 6.4 4.3" fill="none"><path d="M1 1 L3.2 3.3 L5.4 1" stroke="#6e6e6e" stroke-width="1.1" stroke-linecap="round" stroke-linejoin="round"/></svg>
<svg class="r" style="left:102px;top:16px;" width="16" height="10" viewBox="0 0 16 10" fill="none"><path d="M15 5 H1.5 M6 0.8 L1.5 5 L6 9.2" stroke="#6e6e6e" stroke-width="1.2" stroke-linecap="round" stroke-linejoin="round"/></svg>
<svg class="r" style="left:128.5px;top:14px;" width="17" height="15" viewBox="0 0 17 15" fill="none"><path d="M6 12 H1.5 Q0.8 12 0.8 11.3 V1.5 Q0.8 0.8 1.5 0.8 H7 Q7.7 0.8 7.7 1.5 V3" stroke="#f0f0f0" stroke-width="1.3"/><path d="M6.5 3.5 H12 L15.8 7.3 V13.5 Q15.8 14.3 15 14.3 H7.3 Q6.5 14.3 6.5 13.5 Z" stroke="#f0f0f0" stroke-width="1.3" stroke-linejoin="round"/><path d="M12 3.5 V7.3 H15.8" stroke="#f0f0f0" stroke-width="1"/><path d="M9 9.7 H13.3 M9 11.8 H13.3" stroke="#f0f0f0" stroke-width="1"/></svg>
<svg class="r" style="left:157.5px;top:14.5px;" width="11" height="15" viewBox="0 0 11 15" fill="none"><path d="M2.5 0.8 L7.4 10.3 M8.5 0.8 L3.6 10.3" stroke="#f0f0f0" stroke-width="1.2" stroke-linecap="round"/><circle cx="2.6" cy="12" r="1.8" stroke="#f0f0f0" stroke-width="1.1"/><circle cx="8.4" cy="12" r="1.8" stroke="#f0f0f0" stroke-width="1.1"/></svg>
<svg class="r" style="left:181px;top:14px;" width="17" height="13" viewBox="0 0 17 13" fill="none"><path d="M6.5 2.8 H15.8 V11.8 H1 V7" stroke="#666" stroke-width="1.1"/><path d="M15.8 2.8 L8 8.8" stroke="#666" stroke-width="1"/><path d="M1.2 6.5 V2.5 Q1.2 0.8 2.8 0.8 Q4.4 0.8 4.4 2.5 V6.3 Q4.4 7.2 3.6 7.2 Q2.8 7.2 2.8 6.3 V2.8" stroke="#666" stroke-width="1"/></svg>
<span class="t" style="left:210.30px;top:13.23px;font-size:10.3px;color:#666;transform:scaleX(1.0474);-webkit-text-stroke:0.15px;">ab</span>
<span class="t" style="left:210.80px;top:20.81px;font-size:9.6px;color:#666;transform:scaleX(1.0000);-webkit-text-stroke:0.15px;">c</span>
<svg class="r" style="left:215px;top:21px;" width="9" height="8" viewBox="0 0 9 8" fill="none"><path d="M8 1 Q8.5 4.5 3 5 M5 3 L2.5 5 L5 7" stroke="#666" stroke-width="1" stroke-linecap="round" stroke-linejoin="round"/></svg>
<svg class="r" style="left:232.5px;top:14px;" width="12" height="15" viewBox="0 0 12 15" fill="none"><path d="M4 9 V3.8 Q4 2.6 5.1 2.6 Q6.2 2.6 6.2 3.8 V8 Q6.2 7 7.3 7.2 Q8.2 7.4 8.2 8.4 Q8.4 7.8 9.4 8 Q10.2 8.3 10.2 9.3 V11 Q10.2 14.2 7.3 14.2 Q5 14.2 3.5 12 L1.6 9.6 Q1.2 8.8 2 8.5 Q2.8 8.3 4 9.6" stroke="#f0f0f0" stroke-width="1.1" stroke-linecap="round" stroke-linejoin="round"/><path d="M2.2 6.5 Q0.8 5.2 1 3.5 Q1.5 0.8 5 0.7 Q8.7 0.8 9.2 3.7 Q9.3 5 8.6 6" stroke="#f0f0f0" stroke-width="1.1" stroke-linecap="round"/></svg>
<svg class="r" style="left:251.3px;top:18.650000000000002px;" width="6.4" height="4.3" viewBox="0 0 6.4 4.3" fill="none"><path d="M1 1 L3.2 3.3 L5.4 1" stroke="#f0f0f0" stroke-width="1.2" stroke-linecap="round" stroke-linejoin="round"/></svg>
<svg class="r" style="left:268px;top:14px;" width="15" height="15" viewBox="0 0 15 15" fill="none"><path d="M13.5 1.5 V7 H8" stroke="#f0f0f0" stroke-width="1.2" stroke-linecap="round" stroke-linejoin="round"/><path d="M13.2 6.8 Q10 1.2 5.5 2.2 Q1.5 3.5 2.2 7.5 Q2.7 9.5 9 14" stroke="#f0f0f0" stroke-width="1.2" stroke-linecap="round"/></svg>
<svg class="r" style="left:286.8px;top:18.650000000000002px;" width="6.4" height="4.3" viewBox="0 0 6.4 4.3" fill="none"><path d="M1 1 L3.2 3.3 L5.4 1" stroke="#f0f0f0" stroke-width="1.2" stroke-linecap="round" stroke-linejoin="round"/></svg>
<svg class="r" style="left:304px;top:14.3px;" width="13" height="15" viewBox="0 0 13 15" fill="none"><path d="M1 1 H7.5 L11.8 5.3 V13.8 H1 Z M7.5 1 V5.3 H11.8" stroke="#5a5a5a" stroke-width="1.2" stroke-linejoin="round"/></svg>
<span class="t" style="left:331.00px;top:16.17px;font-size:9.5px;color:#666;transform:scaleX(1.0410);-webkit-text-stroke:0.15px;">ab</span>
<div class="r" style="left:329px;top:20.8px;width:15px;height:1px;background:#666;"></div>
<svg class="r" style="left:354.5px;top:15px;" width="16" height="12" viewBox="0 0 16 12" fill="none"><path d="M1 2.5 H4 L5 0.8 H11 L12 2.5 H15 V11.3 H1 Z" stroke="#666" stroke-width="1.1" stroke-linejoin="round"/><circle cx="8" cy="6.8" r="2.6" stroke="#666" stroke-width="1.1"/><circle cx="3" cy="4.3" r="0.6" fill="#666"/></svg>
<svg class="r" style="left:381.5px;top:14px;" width="16" height="15" viewBox="0 0 16 15" fill="none"><path d="M10 11.5 H1 V0.8 H14 V5" stroke="#666" stroke-width="1.1"/><path d="M1 3.5 H14 M1 6.2 H8 M1 8.9 H7.5 M4.5 0.8 V11.5 M8 0.8 V5.5 M11.3 0.8 V3.5" stroke="#666" stroke-width="0.9"/><circle cx="11.3" cy="8.3" r="2.3" stroke="#666" stroke-width="1"/><path d="M7.5 14.5 Q8 11.5 11.3 11.5 Q14.6 11.5 15.1 14.5" stroke="#666" stroke-width="1"/></svg>
<svg class="r" style="left:411.8px;top:19.6px;" width="9" height="7" viewBox="0 0 9 7" fill="none"><path d="M1 1 L3.2 3 L1 5 M4.6 1 L6.8 3 L4.6 5" stroke="#f0f0f0" stroke-width="1.1" stroke-linecap="round" stroke-linejoin="round"/></svg>
<span class="t" style="left:434.50px;top:14.93px;font-size:11.6px;color:#f0f0f0;transform:scaleX(0.9064);-webkit-text-stroke:0.15px;">Logno...</span>
<svg class="r" style="left:510px;top:15px;" width="14" height="14" viewBox="0 0 14 14" fill="none"><circle cx="8.6" cy="5.2" r="4.2" stroke="#e8e8e8" stroke-width="1.2"/><path d="M5.6 8.3 L1 13" stroke="#e8e8e8" stroke-width="1.3" stroke-linecap="round"/></svg>
<div class="r" style="left:558px;top:10.4px;width:22px;height:22px;background:#4e8a1e;border-radius:50%;"></div>
<span class="t" style="left:563.30px;top:16.64px;font-size:9px;color:#fff;transform:scaleX(0.9412);-webkit-text-stroke:0.15px;">AK</span>
<div class="r" style="left:608px;top:20.4px;width:10.2px;height:1.2px;background:#f0f0f0;"></div>
<div class="r" style="left:651.8px;top:16.6px;width:10px;height:9.6px;background:transparent;border:1.2px solid #f0f0f0;border-radius:2px;box-sizing:border-box;"></div>
<svg class="r" style="left:695.5px;top:16.2px;" width="11" height="11" viewBox="0 0 11 11" fill="none"><path d="M1 1 L10 10 M10 1 L1 10" stroke="#f0f0f0" stroke-width="1.2" stroke-linecap="round"/></svg>
<svg class="r" style="left:50.5px;top:552.5px;" width="15" height="14" viewBox="0 0 15 14" fill="none"><rect x="0.6" y="0.6" width="12.4" height="10.4" stroke="#e4e4e4" stroke-width="1.1"/><path d="M0.6 3 H13 M2.8 5.6 H6 M2.8 8.2 H5" stroke="#e4e4e4" stroke-width="1"/><circle cx="9.8" cy="9.2" r="3.9" fill="#1c1c1c" stroke="#e4e4e4" stroke-width="1.1"/><circle cx="9.8" cy="9.2" r="1.5" fill="#e4e4e4"/></svg>
<svg class="r" style="left:79.5px;top:551.5px;" width="14" height="15" viewBox="0 0 14 15" fill="none"><circle cx="5.5" cy="2.2" r="1.5" stroke="#e4e4e4" stroke-width="1"/><path d="M0.8 4.6 L4 5.6 H7 L10.2 4.6 M4 5.6 L4.2 9 L1.8 13.5 M7 5.6 L6.8 8.5 L7.5 9.8" stroke="#e4e4e4" stroke-width="1.1" stroke-linecap="round" stroke-linejoin="round"/><path d="M8.3 10 L12.5 14.2 M12.5 10 L8.3 14.2" stroke="#e4e4e4" stroke-width="1.1" stroke-linecap="round"/></svg>
<svg class="r" style="left:452.5px;top:553px;" width="12" height="12" viewBox="0 0 12 12" fill="none"><rect x="0.5" y="0.5" width="11" height="11" stroke="#7a7a7a" stroke-width="1"/><path d="M0.5 4.2 H11.5 M0.5 7.8 H11.5 M4.2 0.5 V11.5 M7.8 0.5 V11.5" stroke="#7a7a7a" stroke-width="1"/></svg>
<svg class="r" style="left:489px;top:553px;" width="14" height="12" viewBox="0 0 14 12" fill="none"><rect x="0.5" y="0.5" width="12.5" height="11" stroke="#7a7a7a" stroke-width="1"/><rect x="3.3" y="2.8" width="7" height="6.5" stroke="#7a7a7a" stroke-width="0.9"/><path d="M5 5 H8.5 M5 7 H8.5" stroke="#7a7a7a" stroke-width="0.8"/></svg>
<svg class="r" style="left:526px;top:553px;" width="13" height="12" viewBox="0 0 13 12" fill="none"><rect x="0.5" y="0.5" width="12" height="11" stroke="#7a7a7a" stroke-width="1"/><path d="M4.5 0.5 V6.5 H8.5 V0.5" stroke="#7a7a7a" stroke-width="1"/></svg>
<div class="r" style="left:555.5px;top:558.5px;width:6px;height:1px;background:#6a6a6a;"></div>
<div class="r" style="left:567.5px;top:558.5px;width:91px;height:1px;background:#c4c4c4;"></div>
<div class="r" style="left:612.5px;top:555px;width:1.2px;height:8px;background:#c4c4c4;"></div>
<div class="r" style="left:663px;top:558.5px;width:7px;height:1px;background:#6a6a6a;"></div>
<div class="r" style="left:666px;top:555.5px;width:1px;height:7px;background:#6a6a6a;"></div>
</div></body></html>
